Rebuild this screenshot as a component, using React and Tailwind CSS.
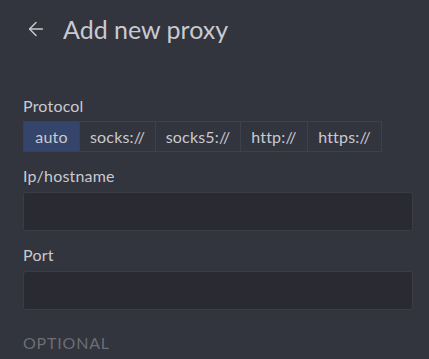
import { ArrowLeft } from 'lucide-react';

const protocols = [
  { label: 'auto', w: 'w-[55px]' },
  { label: 'socks://', w: 'w-[76px]' },
  { label: 'socks5://', w: 'w-[85px]' },
  { label: 'http://', w: 'w-[67px]' },
  { label: 'https://', w: 'w-[74px]' },
];

export default function App() {
  return (
    <div className="w-[429px] h-[359px] overflow-hidden bg-[#32343e] text-[#c9cad0]" style={{ fontFamily: 'Lato, "Noto Sans", sans-serif' }}>
      {/* Header */}
      <div className="flex items-center h-[58px] pl-[25px]">
        <ArrowLeft size={22} strokeWidth={1.6} className="text-[#c9cad0]" />
        <h1 className="ml-[16px] text-[25px] font-normal text-[#c9cad0] leading-none">Add new proxy</h1>
      </div>

      <div className="px-[23px] pt-[38px]">
        {/* Protocol */}
        <p className="text-[16px] leading-[20px] tracking-[0.2px]">Protocol</p>
        <div className="mt-[5px] flex w-fit border border-[#3e414b]">
          {protocols.map((p, i) => (
            <button
              key={p.label}
              className={
                i === 0
                  ? `${p.w} h-[29px] text-[16px] tracking-[0.2px] bg-[#35446a] text-[#c9cad0]`
                  : `${p.w} h-[29px] text-[16px] tracking-[0.2px] text-[#c9cad0] border-l border-[#3e414b]`
              }
            >
              {p.label}
            </button>
          ))}
        </div>

        {/* Ip/hostname */}
        <p className="mt-[14px] text-[16px] leading-[20px] tracking-[0.2px]">Ip/hostname</p>
        <div className="mt-[6px] h-[39px] w-[390px] rounded-[3px] bg-[#2a2a33] border border-[#3a3c46]" />

        {/* Port */}
        <p className="mt-[14px] text-[16px] leading-[20px] tracking-[0.2px]">Port</p>
        <div className="mt-[6px] h-[39px] w-[390px] rounded-[3px] bg-[#2a2a33] border border-[#3a3c46]" />

        <p className="mt-[23px] text-[16px] leading-[20px] tracking-[0.8px] text-[#6c6e76]">OPTIONAL</p>
      </div>
    </div>
  );
}
